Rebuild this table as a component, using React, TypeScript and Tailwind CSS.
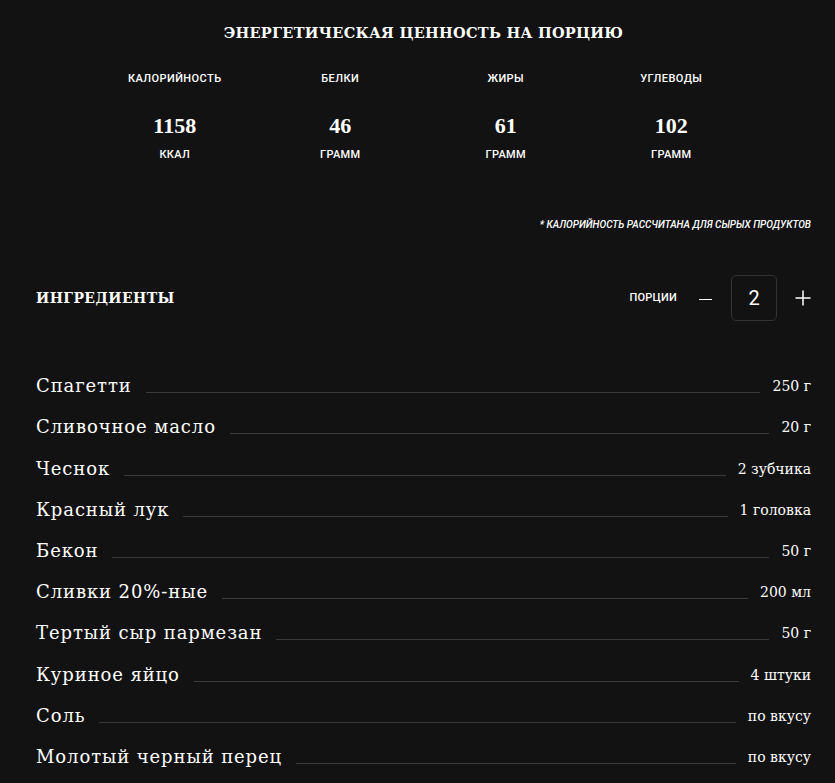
const nutrients = [
  { label: 'Калорийность', value: '1158', unit: 'ккал' },
  { label: 'Белки', value: '46', unit: 'грамм' },
  { label: 'Жиры', value: '61', unit: 'грамм' },
  { label: 'Углеводы', value: '102', unit: 'грамм' },
];

const ingredients = [
  { name: 'Спагетти', amount: '250 г' },
  { name: 'Сливочное масло', amount: '20 г' },
  { name: 'Чеснок', amount: '2 зубчика' },
  { name: 'Красный лук', amount: '1 головка' },
  { name: 'Бекон', amount: '50 г' },
  { name: 'Сливки 20%-ные', amount: '200 мл' },
  { name: 'Тертый сыр пармезан', amount: '50 г' },
  { name: 'Куриное яйцо', amount: '4 штуки' },
  { name: 'Соль', amount: 'по вкусу' },
  { name: 'Молотый черный перец', amount: 'по вкусу' },
];

const serif = "font-['DejaVu_Serif',serif]";
const sans = "font-['Roboto',sans-serif]";

export default function App() {
  return (
    <div className="min-h-screen bg-[#121212] text-white pl-9 pr-6">
      <section className="pt-[23px]">
        <h2 className={`${serif} text-center text-[14.5px] font-bold tracking-[0.02em] uppercase leading-5`}>
          Энергетическая ценность на порцию
        </h2>
        <div className="grid grid-cols-4 w-[662px] ml-[56px] mt-[28px]">
          {nutrients.map((n) => (
            <div key={n.label} className="flex flex-col items-center">
              <span className={`${sans} text-[11px] font-medium uppercase tracking-[0.04em] leading-4`}>
                {n.label}
              </span>
              <span className="font-['Liberation_Serif',serif] font-bold text-[22px] leading-7 mt-[25px]">
                {n.value}
              </span>
              <span className={`${sans} text-[11px] font-medium uppercase tracking-[0.03em] leading-4 mt-[7px]`}>
                {n.unit}
              </span>
            </div>
          ))}
        </div>
        <p className={`${sans} text-right text-[10px] italic font-medium uppercase mt-[54px] leading-4`}>
          * Калорийность рассчитана для сырых продуктов
        </p>
      </section>

      <section className="mt-[42px]">
        <div className="flex items-center justify-between h-[46px]">
          <h3 className={`${serif} text-[14px] font-bold uppercase tracking-[0.03em]`}>Ингредиенты</h3>
          <div className="flex items-center">
            <span className={`${sans} text-[11px] font-medium uppercase tracking-[0.02em]`}>Порции</span>
            <button className="ml-[22px] w-[13px] h-[16px] flex items-center">
              <span className="block w-[13px] h-[1.5px] bg-white mt-[3px]" />
            </button>
            <div className={`${sans} ml-[19px] w-[46px] h-[46px] rounded-[5px] border border-[#333333] flex items-center justify-center text-[20px]`}>
              2
            </div>
            <button className="ml-[18px] w-[16px] h-[16px]">
              <svg viewBox="0 0 16 16" className="w-[16px] h-[16px]" fill="none" stroke="white" strokeWidth="1.5">
                <path d="M8 0.5v15M0.5 8h15" />
              </svg>
            </button>
          </div>
        </div>

        <ul className="mt-[36px] flex flex-col">
          {ingredients.map((i) => (
            <li key={i.name} className="flex items-end h-[41.2px]">
              <span className={`${serif} text-[18px] tracking-[0.05em] leading-6`}>{i.name}</span>
              <span className="flex-1 border-b border-[#3a3a3a] ml-[14px] mb-[5px] mr-[12px]" />
              <span className={`${serif} text-[14px] leading-6`}>{i.amount}</span>
            </li>
          ))}
        </ul>
      </section>
    </div>
  );
}
